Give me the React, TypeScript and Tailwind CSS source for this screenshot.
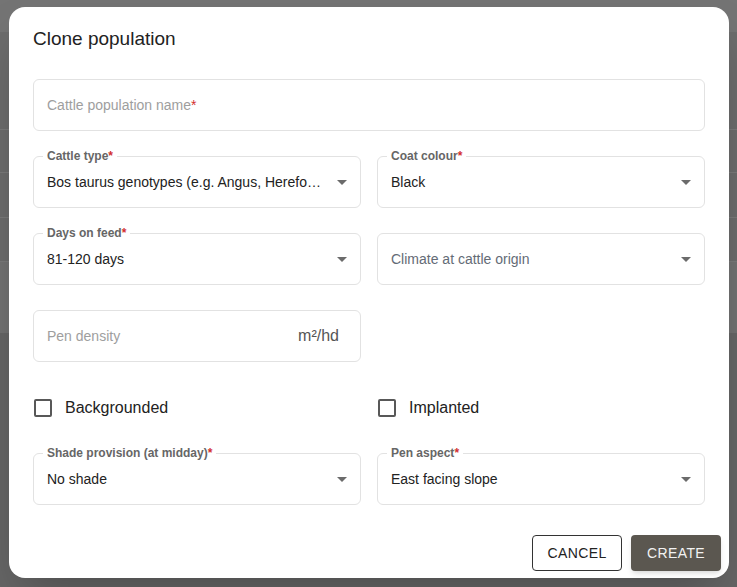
import React from "react";

type FieldProps = {
  label?: string;
  value?: string;
  placeholder?: string;
  required?: boolean;
  select?: boolean;
  adornment?: string;
  muted?: boolean;
};

const Arrow = () => (
  <svg width="24" height="24" viewBox="0 0 24 24" className="shrink-0">
    <path d="M7 10l5 5 5-5z" fill="#6b6b6b" />
  </svg>
);

// outlined field, label sits in the border notch
const Field = ({ label, value, placeholder, required, select, adornment, muted }: FieldProps) => {
  return (
    <div className="relative h-[52px] border border-[#e2e2e2] rounded-[6px] flex items-center pl-[13px] pr-[6px]">
      {label && (
        <span className="absolute -top-[8px] left-[9px] px-1 bg-white text-[12px] leading-[14px] font-bold text-[#666]">
          {label}
          {required && <span className="text-[#d32f2f]">*</span>}
        </span>
      )}
      {value ? (
        <span className="flex-1 min-w-0 whitespace-nowrap text-[14px] text-[#222] mr-[1px] pt-[1px]">{value}</span>
      ) : (
        <span className={`flex-1 min-w-0 whitespace-nowrap text-[14px] pt-[1px] ${muted ? "text-[#646b76]" : "text-[#9e9e9e]"}`}>
          {placeholder}
          {required && <span className="text-[#d32f2f]">*</span>}
        </span>
      )}
      {select && <Arrow />}
      {adornment && <span className="text-[16px] text-[#555] pr-[15px]">{adornment}</span>}
    </div>
  );
};

const Check = ({ label }: { label: string }) => (
  <label className="flex items-center gap-[13px] pl-[1px] h-[41px]">
    <span className="w-[18px] h-[18px] border-2 border-[#585858] rounded-[2px]" />
    <span className="text-[16px] text-[#222]">{label}</span>
  </label>
);

export default function App() {
  return (
    <div className="relative w-[737px] h-[587px] overflow-hidden bg-[#6c6c6c] font-['Liberation_Sans',Arial,sans-serif]">
      {/* page behind the overlay */}
      <div className="flex flex-col h-full">
        <div className="h-[32px] bg-[#747474]" />
        <div className="h-[98px] border-b border-[#7a7a7a]" />
        <div className="h-[43px] border-b border-[#7a7a7a]" />
        <div className="h-[45px] border-b border-[#7a7a7a]" />
        <div className="h-[44px] border-b border-[#7a7a7a]" />
        <div className="h-[71px] bg-[#727272]" />
        <div className="flex-1 bg-[#666]" />
      </div>

      <div className="absolute left-[9px] top-[7px] w-[720px] h-[571px] rounded-[16px] bg-white shadow-2xl flex flex-col">
        <div className="px-6">
          <h2 className="pt-4 h-[48px] text-[19px] leading-8 text-[#222]">Clone population</h2>

          <div className="mt-6 grid grid-cols-2 gap-x-4 gap-y-[25px]">
            <div className="col-span-2">
              <Field placeholder="Cattle population name" required />
            </div>
            <Field label="Cattle type" required select value="Bos taurus genotypes (e.g. Angus, Herefo…" />
            <Field label="Coat colour" required select value="Black" />
            <Field label="Days on feed" required select value="81-120 days" />
            <Field placeholder="Climate at cattle origin" select muted />
            <Field placeholder="Pen density" adornment="m²/hd" />
            <div />
            <Check label="Backgrounded" />
            <Check label="Implanted" />
            <Field label="Shade provision (at midday)" required select value="No shade" />
            <Field label="Pen aspect" required select value="East facing slope" />
          </div>
        </div>

        <div className="mt-auto flex justify-end gap-[9px] pr-2 pb-[7px]">
          <button className="w-[90px] h-[36px] border border-[#333] rounded-[4px] text-[14px] tracking-[0.4px] text-[#222]">
            CANCEL
          </button>
          <button className="w-[90px] h-[36px] rounded-[4px] bg-[#5b5750] text-[14px] tracking-[0.4px] text-[#f2f2f2] shadow-md">
            CREATE
          </button>
        </div>
      </div>
    </div>
  );
}
